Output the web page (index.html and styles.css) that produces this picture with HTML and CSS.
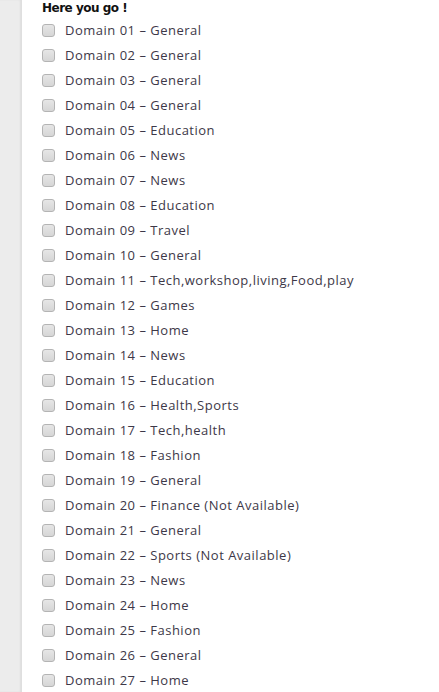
FILE: index.html
```html
<!DOCTYPE html>
<html>
<head>
<meta charset="utf-8">
<link rel="stylesheet" href="styles.css">
</head>
<body>
<div class="page">
  <aside class="rail"></aside>
  <main class="content">
    <h4 class="title">Here you go !</h4>
    <ul class="domains">
      <li><label><input type="checkbox"><span>Domain 01 – General</span></label></li>
      <li><label><input type="checkbox"><span>Domain 02 – General</span></label></li>
      <li><label><input type="checkbox"><span>Domain 03 – General</span></label></li>
      <li><label><input type="checkbox"><span>Domain 04 – General</span></label></li>
      <li><label><input type="checkbox"><span>Domain 05 – Education</span></label></li>
      <li><label><input type="checkbox"><span>Domain 06 – News</span></label></li>
      <li><label><input type="checkbox"><span>Domain 07 – News</span></label></li>
      <li><label><input type="checkbox"><span>Domain 08 – Education</span></label></li>
      <li><label><input type="checkbox"><span>Domain 09 – Travel</span></label></li>
      <li><label><input type="checkbox"><span>Domain 10 – General</span></label></li>
      <li><label><input type="checkbox"><span>Domain 11 – Tech,workshop,living,Food,play</span></label></li>
      <li><label><input type="checkbox"><span>Domain 12 – Games</span></label></li>
      <li><label><input type="checkbox"><span>Domain 13 – Home</span></label></li>
      <li><label><input type="checkbox"><span>Domain 14 – News</span></label></li>
      <li><label><input type="checkbox"><span>Domain 15 – Education</span></label></li>
      <li><label><input type="checkbox"><span>Domain 16 – Health,Sports</span></label></li>
      <li><label><input type="checkbox"><span>Domain 17 – Tech,health</span></label></li>
      <li><label><input type="checkbox"><span>Domain 18 – Fashion</span></label></li>
      <li><label><input type="checkbox"><span>Domain 19 – General</span></label></li>
      <li><label><input type="checkbox"><span>Domain 20 – Finance (Not Available)</span></label></li>
      <li><label><input type="checkbox"><span>Domain 21 – General</span></label></li>
      <li><label><input type="checkbox"><span>Domain 22 – Sports (Not Available)</span></label></li>
      <li><label><input type="checkbox"><span>Domain 23 – News</span></label></li>
      <li><label><input type="checkbox"><span>Domain 24 – Home</span></label></li>
      <li><label><input type="checkbox"><span>Domain 25 – Fashion</span></label></li>
      <li><label><input type="checkbox"><span>Domain 26 – General</span></label></li>
      <li><label><input type="checkbox"><span>Domain 27 – Home</span></label></li>
    </ul>
  </main>
</div>
</body>
</html>
```
FILE: styles.css
```css
html, body {
  margin: 0;
  padding: 0;
  background: #fff;
}

.page {
  display: flex;
  min-height: 100vh;
}

.rail {
  flex: 0 0 22px;
  background: #ececec;
  box-shadow: inset -2px 0 2px rgba(0, 0, 0, 0.06);
}

.content {
  flex: 1;
  padding-left: 20px;
}

.title {
  margin: 0;
  padding-top: 1px;
  font-family: "DejaVu Sans", Verdana, sans-serif;
  font-weight: bold;
  font-size: 12px;
  letter-spacing: -0.5px;
  line-height: 14px;
  color: #111;
}

.domains {
  list-style: none;
  margin: 0;
  padding: 2px 0 0;
}

.domains li {
  height: 25px;
  display: flex;
  align-items: center;
}

.domains label {
  display: flex;
  align-items: center;
  font-family: "Open Sans", sans-serif;
  font-size: 13px;
  letter-spacing: 0.5px;
  color: #3d3848;
}

.domains input {
  appearance: none;
  -webkit-appearance: none;
  width: 13px;
  height: 13px;
  margin: 1px 10px 0 0;
  border: 1px solid #b4b4b4;
  border-radius: 3px;
  background: linear-gradient(#e6e6e6, #d6d6d6);
  box-sizing: border-box;
}
```
